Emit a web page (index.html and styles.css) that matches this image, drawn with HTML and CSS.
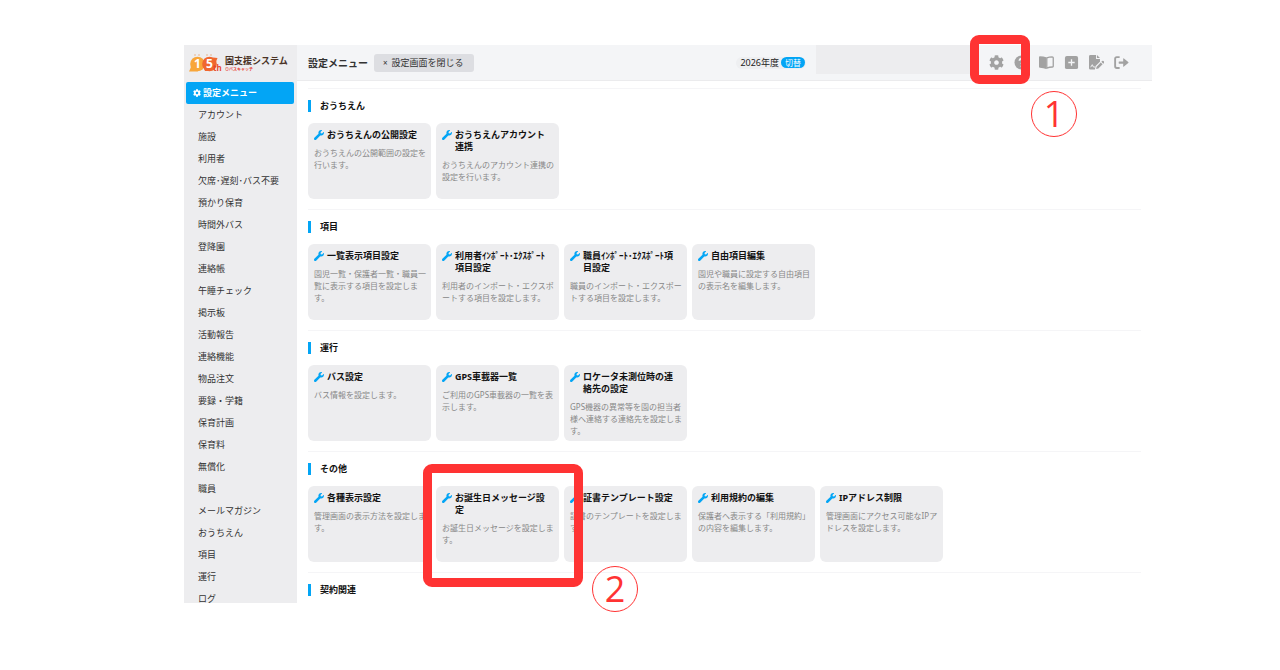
FILE: index.html
```html
<!DOCTYPE html>
<html lang="ja">
<head>
<meta charset="utf-8">
<title>設定メニュー</title>
<link rel="stylesheet" href="styles.css">
</head>
<body>
<svg class="defs" aria-hidden="true">
  <symbol id="gear" viewBox="0 0 512 512"><path d="M487.4 315.7l-42.6-24.6c4.3-23.2 4.3-47 0-70.2l42.6-24.6c4.9-2.8 7.1-8.6 5.5-14-11.1-35.6-30-67.8-54.7-94.6-3.8-4.1-10-5.1-14.8-2.3L380.8 110c-17.9-15.4-38.5-27.3-60.8-35.1V25.8c0-5.6-3.9-10.5-9.4-11.7-36.7-8.2-74.3-7.8-109.2 0-5.5 1.2-9.4 6.1-9.4 11.7V75c-22.2 7.9-42.8 19.8-60.8 35.1L88.7 85.5c-4.9-2.8-11-1.9-14.8 2.3-24.7 26.7-43.6 58.9-54.7 94.6-1.7 5.4.6 11.2 5.5 14L67.3 221c-4.3 23.2-4.3 47 0 70.2l-42.6 24.6c-4.9 2.8-7.1 8.6-5.5 14 11.1 35.6 30 67.8 54.7 94.6 3.8 4.1 10 5.1 14.8 2.3l42.6-24.6c17.9 15.4 38.5 27.3 60.8 35.1v49.2c0 5.6 3.9 10.5 9.4 11.7 36.7 8.2 74.3 7.8 109.2 0 5.5-1.2 9.4-6.1 9.4-11.7v-49.2c22.2-7.9 42.8-19.8 60.8-35.1l42.6 24.6c4.9 2.8 11 1.9 14.8-2.3 24.7-26.7 43.6-58.9 54.7-94.6 1.5-5.5-.7-11.3-5.6-14.1zM256 336c-44.1 0-80-35.9-80-80s35.9-80 80-80 80 35.9 80 80-35.9 80-80 80z"/></symbol>
  <symbol id="wrench" viewBox="0 0 512 512"><path d="M507.73 109.1c-2.24-9.03-13.54-12.09-20.12-5.51l-74.36 74.36-67.88-11.31-11.31-67.88 74.36-74.36c6.62-6.62 3.43-17.9-5.66-20.16-47.38-11.74-99.55.91-136.58 37.93-39.64 39.64-50.55 97.1-34.05 147.2L18.74 402.76c-24.99 24.99-24.99 65.51 0 90.5 24.99 24.99 65.51 24.99 90.5 0l213.21-213.21c50.12 16.71 107.47 5.68 147.37-34.22 37.07-37.07 49.7-89.32 37.91-136.73z"/></symbol>
</svg>
<div class="stage">
  <div class="app">
    <aside class="sidebar">
      <a class="logo" href="#">
        <svg class="mark" viewBox="0 0 34 20" aria-hidden="true">
          <circle cx="8.500" cy="10" r="7.3" fill="#f8a63a"/>
          <path d="M2.500 12L0 17.500h9z" fill="#f8a63a"/>
          <circle cx="20.500" cy="10" r="7.3" fill="#f0672f"/>
          <path d="M13.500 11L16 17l6 0z" fill="#f0672f"/>
          <path d="M24 3.500l4.500 .5-2 5z" fill="#f0672f"/>
          <g fill="#e8a06a"><circle cx="6" cy="1" r=".7"/><circle cx="10" cy="1" r=".7"/><circle cx="18" cy="1" r=".7"/><circle cx="22" cy="1" r=".7"/></g>
          <text x="8.500" y="14" class="mark-num">1</text>
          <text x="20.500" y="14" class="mark-num">5</text>
          <text x="24" y="17" class="mark-th">th</text>
        </svg>
        <span class="brand"><span class="brand-name">園支援システム</span><span class="brand-sub">⊙バスキャッチ</span></span>
      </a>
      <nav class="menu">
        <a class="active" href="#"><svg class="ico-s"><use href="#gear"/></svg>設定メニュー</a>
        <a href="#">アカウント</a>
        <a href="#">施設</a>
        <a href="#">利用者</a>
        <a href="#">欠席･遅刻･バス不要</a>
        <a href="#">預かり保育</a>
        <a href="#">時間外バス</a>
        <a href="#">登降園</a>
        <a href="#">連絡帳</a>
        <a href="#">午睡チェック</a>
        <a href="#">掲示板</a>
        <a href="#">活動報告</a>
        <a href="#">連絡機能</a>
        <a href="#">物品注文</a>
        <a href="#">要録・学籍</a>
        <a href="#">保育計画</a>
        <a href="#">保育料</a>
        <a href="#">無償化</a>
        <a href="#">職員</a>
        <a href="#">メールマガジン</a>
        <a href="#">おうちえん</a>
        <a href="#">項目</a>
        <a href="#">運行</a>
        <a href="#">ログ</a>
      </nav>
    </aside>
    <div class="content">
      <header class="topbar">
        <h1>設定メニュー</h1>
        <button class="close" type="button"><span class="x">×</span>設定画面を閉じる</button>
        <div class="year">2026年度<button type="button">切替</button></div>
        <div class="account"></div>
        <div class="tools">
          <button type="button" aria-label="設定"><svg><use href="#gear"/></svg></button>
          <button type="button" aria-label="ヘルプ"><svg viewBox="0 0 16 16"><circle cx="8" cy="8" r="7.5"/><path class="cut" d="M5.8 6.2a2.2 2.2 0 1 1 3.3 1.9c-.8.5-1.1.8-1.1 1.6M8 11.4v1.2"/></svg></button>
          <button type="button" aria-label="マニュアル"><svg viewBox="0 0 16 16"><path d="M0 2.2Q0 1.200 1 1.200Q5 1.200 7.600 2.400V15Q5 13.600 1 13.500Q0 13.400 0 12.500z"/><path class="line mid" d="M8.300 3Q11 2 14 1.900Q15.200 1.900 15.200 2.900V12Q15.200 12.800 14.400 12.800Q11 12.900 8.300 14z"/></svg></button>
          <button type="button" aria-label="追加"><svg viewBox="0 0 16 16"><rect x="1" y="1" width="14" height="14" rx="2"/><path class="cut mid" d="M8 4.600v6.800M4.600 8h6.800"/></svg></button>
          <button type="button" aria-label="書類"><svg viewBox="0 0 16 16"><path d="M1.500 0H7.500V4.200H11.700V7.200L7 11.800L6.300 15.500H1.500Q0 15.500 0 14V1.500Q0 0 1.500 0zM8.500 0L11.700 3.200H8.500z"/><path class="cut thin" d="M1.800 13L3.500 10.300L4.700 12.800H6.500"/><path d="M13.200 7.200L15.200 9.200L16 8.400Q16.600 7.600 15.900 6.900L15.500 6.500Q14.800 5.800 14 6.400zM12.500 7.900L14.500 9.900L10 14.400L7.600 15L8.100 12.400z"/></svg></button>
          <button type="button" aria-label="ログアウト"><svg viewBox="0 0 16 16"><path class="line" d="M6 2.200H3Q1.200 2.200 1.200 4V12Q1.200 13.800 3 13.800H6"/><path d="M5.500 6.800H9.800V4Q9.800 3 10.600 3.700L15.200 7.500Q15.800 8 15.200 8.500L10.600 12.300Q9.800 13 9.800 12V9.200H5.500Q5 9.200 5 8.700V7.300Q5 6.800 5.500 6.800z"/></svg></button>
        </div>
      </header>
      <main>
        <section>
          <h2>おうちえん</h2>
          <div class="cards">
            <a class="card" href="#"><h3><svg><use href="#wrench"/></svg><span>おうちえんの公開設定</span></h3><p>おうちえんの公開範囲の設定を行います。</p></a>
            <a class="card" href="#"><h3><svg><use href="#wrench"/></svg><span>おうちえんアカウント連携</span></h3><p>おうちえんのアカウント連携の設定を行います。</p></a>
          </div>
        </section>
        <section>
          <h2>項目</h2>
          <div class="cards">
            <a class="card" href="#"><h3><svg><use href="#wrench"/></svg><span>一覧表示項目設定</span></h3><p>園児一覧・保護者一覧・職員一覧に表示する項目を設定します。</p></a>
            <a class="card" href="#"><h3><svg><use href="#wrench"/></svg><span>利用者ｲﾝﾎﾟｰﾄ･ｴｸｽﾎﾟｰﾄ項目設定</span></h3><p>利用者のインポート・エクスポートする項目を設定します。</p></a>
            <a class="card" href="#"><h3><svg><use href="#wrench"/></svg><span>職員ｲﾝﾎﾟｰﾄ･ｴｸｽﾎﾟｰﾄ項目設定</span></h3><p>職員のインポート・エクスポートする項目を設定します。</p></a>
            <a class="card" href="#"><h3><svg><use href="#wrench"/></svg><span>自由項目編集</span></h3><p>園児や職員に設定する自由項目の表示名を編集します。</p></a>
          </div>
        </section>
        <section>
          <h2>運行</h2>
          <div class="cards">
            <a class="card" href="#"><h3><svg><use href="#wrench"/></svg><span>バス設定</span></h3><p>バス情報を設定します。</p></a>
            <a class="card" href="#"><h3><svg><use href="#wrench"/></svg><span>GPS車載器一覧</span></h3><p>ご利用のGPS車載器の一覧を表示します。</p></a>
            <a class="card" href="#"><h3><svg><use href="#wrench"/></svg><span>ロケータ未測位時の連絡先の設定</span></h3><p>GPS機器の異常等を園の担当者様へ連絡する連絡先を設定します。</p></a>
          </div>
        </section>
        <section>
          <h2>その他</h2>
          <div class="cards">
            <a class="card" href="#"><h3><svg><use href="#wrench"/></svg><span>各種表示設定</span></h3><p>管理画面の表示方法を設定します。</p></a>
            <a class="card" href="#"><h3><svg><use href="#wrench"/></svg><span>お誕生日メッセージ設定</span></h3><p>お誕生日メッセージを設定します。</p></a>
            <a class="card" href="#"><h3><svg><use href="#wrench"/></svg><span>証書テンプレート設定</span></h3><p>証書のテンプレートを設定します。</p></a>
            <a class="card" href="#"><h3><svg><use href="#wrench"/></svg><span>利用規約の編集</span></h3><p>保護者へ表示する「利用規約」の内容を編集します。</p></a>
            <a class="card" href="#"><h3><svg><use href="#wrench"/></svg><span>IPアドレス制限</span></h3><p>管理画面にアクセス可能なIPアドレスを設定します。</p></a>
          </div>
        </section>
        <section>
          <h2>契約関連</h2>
        </section>
      </main>
    </div>
  </div>
  <div class="frame frame-gear"></div>
  <div class="step step-one">1</div>
  <div class="frame frame-card"></div>
  <div class="step step-two">2</div>
</div>
</body>
</html>
```

FILE: styles.css
```css
* {
  box-sizing: border-box;
}

body {
  margin: 0;
  background: #fff;
  color: #333;
  font-family: "Noto Sans", "Noto Sans CJK JP", sans-serif;
  font-size: 9px;
}

h1, h2, h3, p {
  margin: 0;
}

a {
  color: inherit;
  text-decoration: none;
}

button {
  margin: 0;
  padding: 0;
  border: 0;
  background: none;
  color: inherit;
  font: inherit;
}

.defs {
  position: absolute;
  width: 0;
  height: 0;
}

.stage {
  position: relative;
  display: flex;
  height: 100vh;
  padding: 45px 128px 67px 184px;
  overflow: hidden;
}

.app {
  display: flex;
  flex: 1;
  min-width: 0;
  overflow: hidden;
}

/* Sidebar */
.sidebar {
  flex: none;
  width: 113px;
  background: #ededef;
}

.logo {
  display: flex;
  align-items: center;
  gap: 2px;
  height: 37px;
  padding-left: 5px;
}

.mark {
  flex: none;
  width: 34px;
  height: 20px;
}

.mark-num {
  fill: #fff;
  font: 700 12px "Noto Sans", sans-serif;
  text-anchor: middle;
}

.mark-th {
  fill: #e8482c;
  font: 700 8px "Noto Sans", sans-serif;
}

.brand {
  display: flex;
  flex-direction: column;
  white-space: nowrap;
  font-weight: 700;
}

.brand-name {
  color: #4a3326;
  font-size: 9px;
  line-height: 12px;
}

.brand-sub {
  color: #e8382c;
  font-size: 4px;
  line-height: 6px;
}

.menu a {
  display: block;
  padding-left: 14px;
  line-height: 22px;
  white-space: nowrap;
}

.menu .active {
  display: flex;
  align-items: center;
  gap: 2px;
  margin: 0 3px 0 2px;
  padding-left: 7px;
  border-radius: 2px;
  background: #03a5f5;
  color: #fff;
  font-weight: 700;
}

.ico-s {
  width: 8px;
  height: 8px;
  fill: currentColor;
}

/* Top bar */
.content {
  flex: 1;
  min-width: 0;
}

.topbar {
  display: flex;
  align-items: center;
  height: 36px;
  padding: 0 23px 0 11px;
  border-bottom: 1px solid #ebebed;
  background: #f4f5f7;
  white-space: nowrap;
}

.topbar h1 {
  font-size: 10px;
  font-weight: 600;
}

.close {
  height: 18px;
  margin-left: 6px;
  padding: 0 10px 0 9px;
  border-radius: 3px;
  background: #dddee2;
  font-size: 9px;
}

.close .x {
  margin-right: 4px;
  font-size: 8px;
}

.year {
  display: flex;
  align-items: center;
  gap: 2px;
  height: 12px;
  margin: 0 10px 0 auto;
  padding: 0 1px 0 4px;
  border-radius: 6px;
  background: #eeeff1;
  color: #222;
  font-size: 9px;
}

.year button {
  height: 11px;
  padding: 0 4px;
  border-radius: 6px;
  background: #03a5f5;
  color: #fff;
  font-size: 8px;
  line-height: 11px;
}

.account {
  align-self: flex-start;
  width: 157px;
  height: 29px;
  background: #ededef;
}

.tools {
  display: flex;
  gap: 10px;
  margin-left: 16px;
}

.tools button {
  display: flex;
}

.tools svg {
  width: 15px;
  height: 15px;
  fill: #a2a2a2;
}

.tools .cut {
  fill: none;
  stroke: #f4f5f7;
  stroke-width: 2;
}

.tools .thin {
  stroke-width: 1;
}

.tools .line {
  fill: none;
  stroke: #a2a2a2;
  stroke-width: 2;
}

.tools .mid {
  stroke-width: 1.4;
}

/* Sections */
main {
  padding: 7px 11px 0;
}

section {
  padding: 11px 0 10px;
  border-top: 1px solid #f5f5f7;
}

section h2 {
  margin-bottom: 11px;
  padding-left: 9px;
  border-left: 3px solid #03a5f5;
  color: #111;
  font-size: 9px;
  font-weight: 700;
  line-height: 12px;
}

.cards {
  display: flex;
  gap: 5px;
}

.card {
  flex: none;
  width: 123px;
  min-height: 76px;
  padding: 6px 5px 4px 6px;
  border-radius: 6px;
  background: #ededef;
  word-break: break-all;
  line-break: loose;
}

.card h3 {
  display: flex;
  gap: 3px;
  margin-bottom: 6px;
  padding: 0 5px 0 0;
  color: #111;
  font-size: 9px;
  font-weight: 700;
  line-height: 12px;
}

.card svg {
  flex: none;
  width: 10px;
  height: 10px;
  margin-top: 1px;
  fill: #03a5f5;
}

.card p {
  color: #888;
  font-size: 8px;
  line-height: 12px;
}

/* Annotations laid over the screen */
.frame {
  position: absolute;
  border: 9px solid #ff3333;
  border-radius: 9px;
}

.frame-gear {
  top: 35px;
  right: 250px;
  width: 60px;
  height: 49px;
}

.frame-card {
  top: 464px;
  left: 423px;
  width: 160px;
  height: 123px;
}

.step {
  position: absolute;
  width: 46px;
  height: 46px;
  border: 1px solid #ff3333;
  border-radius: 50%;
  color: #ff3333;
  font-family: "Open Sans", "Noto Sans", sans-serif;
  font-size: 36px;
  font-weight: 500;
  line-height: 44px;
  text-align: center;
}

.step-one {
  top: 91px;
  right: 203px;
}

.step-two {
  top: 566px;
  left: 592px;
}
```
